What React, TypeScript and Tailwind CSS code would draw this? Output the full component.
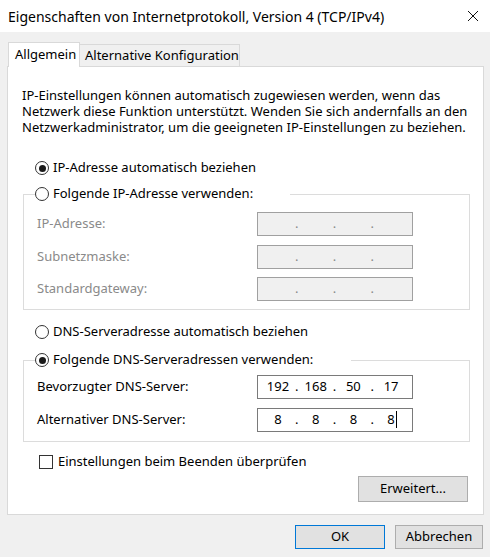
import React from "react";

const font = { fontFamily: '"Noto Sans", "Open Sans", sans-serif' };

function Radio({ checked, label, className = "" }: { checked?: boolean; label: string; className?: string }) {
  return (
    <div className={`flex items-center h-[16px] ${className}`}>
      <span className="w-[14px] h-[14px] rounded-full border border-[#333333] bg-white flex items-center justify-center shrink-0">
        {checked && <span className="w-[7px] h-[7px] rounded-full bg-[#1a1a1a]" />}
      </span>
      <span className="ml-[4px] whitespace-nowrap">{label}</span>
    </div>
  );
}

function IpField({ values, disabled, caret }: { values: string[]; disabled?: boolean; caret?: boolean }) {
  return (
    <div
      className={`w-[156px] h-[24px] border flex items-center pl-[3px] ${
        disabled ? "bg-[#f0f0f0] border-[#a0a0a0] text-[#8a8a8a]" : "bg-white border-[#7a7a7a] text-black"
      }`}
    >
      {values.map((v, i) => (
        <React.Fragment key={i}>
          <span className="w-[34px] text-center relative">
            {v}
            {caret && i === 3 && <span className="absolute top-[1px] w-px h-[17px] bg-black ml-[1px]" />}
          </span>
          {i < 3 && <span className="w-[3.7px] text-center">.</span>}
        </React.Fragment>
      ))}
    </div>
  );
}

function Row({ label, values, disabled, caret, className = "" }: { label: string; values: string[]; disabled?: boolean; caret?: boolean; className?: string }) {
  return (
    <div className={`flex items-center h-[24px] ${className}`}>
      <span className={`w-[220px] whitespace-nowrap ${disabled ? "text-[#8a8a8a]" : "text-black"}`}>{label}</span>
      <IpField values={values} disabled={disabled} caret={caret} />
    </div>
  );
}

export default function App() {
  const empty = ["", "", "", ""];
  return (
    <div className="w-[490px] h-[557px] bg-[#f0f0f0] flex flex-col text-[13px] text-black overflow-hidden" style={font}>
      {/* Titelleiste */}
      <div className="h-[32px] bg-white flex items-center justify-between pl-[8px] pr-[10px] shrink-0">
        <span className="text-[14px] text-black whitespace-nowrap">Eigenschaften von Internetprotokoll, Version 4 (TCP/IPv4)</span>
        <svg width="12" height="12" viewBox="0 0 12 12" className="mr-[1px]">
          <path d="M1 1 L11 11 M11 1 L1 11" stroke="#111" strokeWidth="1" />
        </svg>
      </div>

      {/* Reiter */}
      <div className="mt-[10px] pl-[8px] h-[24px] flex items-end shrink-0">
        <div className="w-[72px] h-[25px] -mb-px relative z-10 bg-white border-l border-t border-r border-[#d9d9d9] flex items-center pl-[6px] pb-[1px]">
          Allgemein
        </div>
        <div className="w-[160px] h-[22px] bg-[#f0f0f0] border-t border-r border-[#d9d9d9] flex items-center pl-[5px]">
          Alternative Konfiguration
        </div>
      </div>

      {/* Inhalt */}
      <div className="ml-[7px] w-[477px] h-[449px] bg-white border border-[#d9d9d9] flex flex-col pl-[14px] pr-[14px] pt-[20px] shrink-0">
        <div className="leading-[16px] whitespace-nowrap">
          <div>IP-Einstellungen können automatisch zugewiesen werden, wenn das</div>
          <div>Netzwerk diese Funktion unterstützt. Wenden Sie sich andernfalls an den</div>
          <div>Netzwerkadministrator, um die geeigneten IP-Einstellungen zu beziehen.</div>
        </div>

        <Radio checked label="IP-Adresse automatisch beziehen" className="mt-[25px] ml-[13px]" />

        <fieldset className="mt-[10px] ml-[1px] w-[447px] border border-[#dcdcdc] pl-[13px] pt-[10px] pb-[8px]">
          <legend className="-ml-[2px] w-[255px]">
            <Radio label="Folgende IP-Adresse verwenden:" />
          </legend>
          <Row label="IP-Adresse:" values={empty} disabled />
          <Row label="Subnetzmaske:" values={empty} disabled className="mt-[9px]" />
          <Row label="Standardgateway:" values={empty} disabled className="mt-[8px]" />
        </fieldset>

        <Radio label="DNS-Serveradresse automatisch beziehen" className="mt-[14px] ml-[13px]" />

        <fieldset className="mt-[12px] ml-[1px] w-[447px] border border-[#dcdcdc] pl-[13px] pt-[7px] pb-[9px]">
          <legend className="-ml-[2px] w-[316px]">
            <Radio checked label="Folgende DNS-Serveradressen verwenden:" />
          </legend>
          <Row label="Bevorzugter DNS-Server:" values={["192", "168", "50", "17"]} />
          <Row label="Alternativer DNS-Server:" values={["8", "8", "8", "8"]} caret className="mt-[9px]" />
        </fieldset>

        <div className="mt-[12px] ml-[17px] flex items-center h-[16px]">
          <span className="w-[14px] h-[14px] border border-[#333333] bg-white shrink-0" />
          <span className="ml-[5px] whitespace-nowrap">Einstellungen beim Beenden überprüfen</span>
        </div>

        <div className="mt-[6px] flex justify-end pr-[1px]">
          <button className="w-[110px] h-[26px] bg-[#e1e1e1] border border-[#adadad] text-black">Erweitert...</button>
        </div>
      </div>

      {/* Schaltflächen */}
      <div className="mt-[10px] flex justify-end gap-[10px] pr-[7px]">
        <button className="w-[90px] h-[24px] bg-[#e1e1e1] border border-[#0078d7] text-black">OK</button>
        <button className="w-[88px] h-[24px] bg-[#e1e1e1] border border-[#adadad] text-black">Abbrechen</button>
      </div>
    </div>
  );
}
